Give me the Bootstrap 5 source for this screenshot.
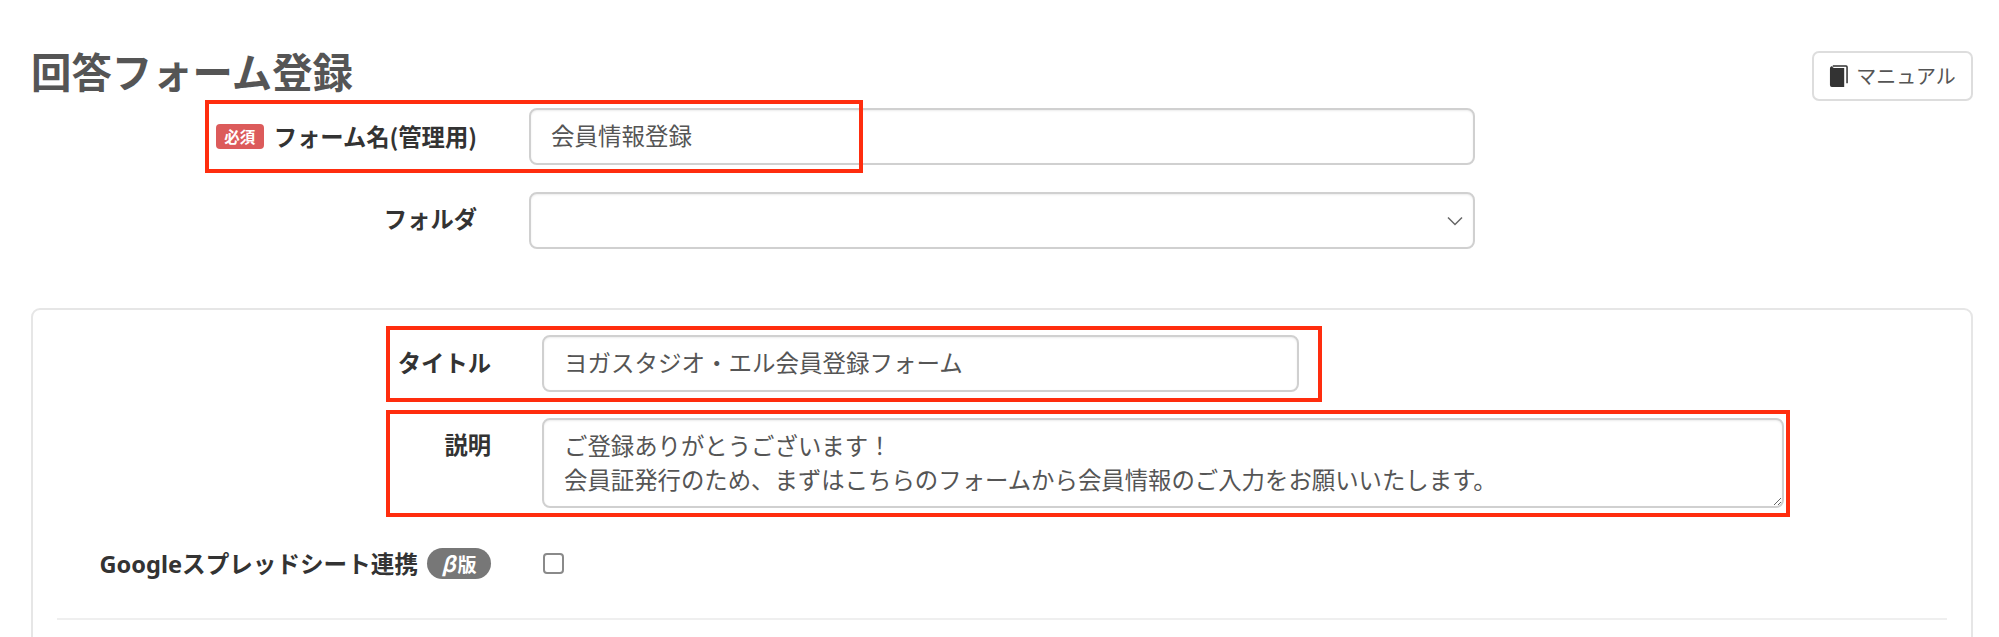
<!DOCTYPE html>
<html lang="ja">
<head>
<meta charset="utf-8">
<title>回答フォーム登録</title>
<link href="https://cdn.jsdelivr.net/npm/bootstrap@5.3.0/dist/css/bootstrap.min.css" rel="stylesheet">
<style>
html, body { height: 100%; overflow: hidden; background: #fff; }
body { font-family: "Noto Sans", "Noto Sans CJK JP", sans-serif; font-size: 23.3px; color: #333; }
.page-shell { height: 637px; overflow: hidden; padding: 51px 26px 0 31px; }
.top-bar { height: 50px; margin-bottom: 7px; }
.page-heading { font-family: "Noto Sans CJK JP", sans-serif; font-size: 40.4px; font-weight: 700; color: #555; line-height: 48px; margin: -4px 0 0; }
.manual-btn { width: 161px; height: 50px; border: 2px solid #ddd; border-radius: 7px; background: #fff; color: #555; font-size: 20px; padding: 0; font-family: "Noto Sans CJK JP", sans-serif; }
.manual-btn svg { width: 19px; height: 22px; }
.field-row { position: relative; }
.field-label { font-weight: 700; color: #333; line-height: 1.2; font-family: "Noto Sans CJK JP", sans-serif; }
.outer-label { width: 446px; margin-right: 52px; }
.inner-label { width: 434px; margin-right: 51px; }
.wide-field { width: 946px; }
.form-control.big-field, .form-select.big-field {
  height: 57px; border: 2px solid #d0d0d0; border-radius: 8px; font-size: 23.5px; color: #555;
  padding: 0 20px 3px; box-shadow: inset 0 1px 2px rgba(0,0,0,.08); font-family: "Noto Sans CJK JP", sans-serif;
}
.form-select.big-field {
  background-image: url("data:image/svg+xml,%3csvg xmlns='http://www.w3.org/2000/svg' viewBox='0 0 16 16'%3e%3cpath fill='none' stroke='%23666' stroke-width='1.5' d='M1 4.5l7 7 7-7'/%3e%3c/svg%3e");
  background-position: right 9px center; background-size: 18px 16px;
}
.outer-row-1 { margin-bottom: 27px; }
.folder-label { padding-bottom: 3px; }
.panel-box { margin-top: 59px; height: 400px; border: 2px solid #e6e6e6; border-radius: 9px; padding: 25px 24px 0; }
.title-field { width: 757px; }
.desc-field { width: 1242px; }
.form-control.big-field.desc-area { height: 90px; padding: 8px 20px 0; line-height: 34px; resize: vertical; font-size: 23.4px; }
.title-row { margin-bottom: 26px; }
.title-row .field-label { padding-bottom: 2px; }
.desc-row { margin-bottom: 40px; align-items: flex-start; }
.desc-row .field-label { padding-top: 13px; }
.google-row { height: 31px; }
.google-text { font-size: 23.6px; }
.google-text b { font-family: "Noto Sans", sans-serif; font-weight: 700; }
.req-tag { width: 48px; height: 25px; background: #dc5b5b; color: #fff; border-radius: 4px; font-size: 15.5px; font-weight: 700; margin-right: 10px; line-height: 25px; text-align: center; }
.beta-tag { width: 64px; height: 31px; background: #777; color: #fff; border-radius: 16px; font-size: 19px; font-weight: 700; margin-left: 9px; line-height: 31px; text-align: center; }
.beta-tag i { font-size: 21px; margin-right: 2px; }
.form-check-input.sync-check { width: 21px; height: 21px; margin: 0 0 0 1px; border: 2px solid #8a8a8a; border-radius: 4px; }
.panel-rule { margin: 39px 0 0; border: 0; border-top: 2px solid #efefef; opacity: 1; }
.red-mark { position: absolute; border: 4px solid #ff2d0e; pointer-events: none; }
.mark-name { left: 174px; top: -8px; width: 658px; height: 73px; }
.mark-title { left: 329px; top: -9px; width: 936px; height: 76px; }
.mark-desc { left: 329px; top: -8px; width: 1404px; height: 107px; }
</style>
</head>
<body>
<div class="page-shell">
  <div class="top-bar d-flex justify-content-between align-items-start">
    <h1 class="page-heading">回答フォーム登録</h1>
    <button type="button" class="btn manual-btn d-flex align-items-center justify-content-center gap-2">
      <svg viewBox="0 0 20 23" aria-hidden="true"><path d="M4 1h14a1 1 0 0 1 1 1v17" fill="none" stroke="#333" stroke-width="1.6"/><path d="M1 4a3 3 0 0 1 3-3l-.5 0c0 1 .5 2 2 2H16v20H3a2 2 0 0 1-2-2z" fill="#333"/></svg>
      <span>マニュアル</span>
    </button>
  </div>

  <div class="field-row outer-row-1 d-flex align-items-center">
    <div class="outer-label field-label d-flex justify-content-end align-items-center">
      <span class="req-tag">必須</span><span>フォーム名(管理用)</span>
    </div>
    <input class="form-control big-field wide-field" type="text" value="会員情報登録">
    <div class="red-mark mark-name"></div>
  </div>

  <div class="field-row d-flex align-items-center">
    <div class="outer-label field-label folder-label text-end">フォルダ</div>
    <select class="form-select big-field wide-field"><option></option></select>
  </div>

  <div class="panel-box">
    <div class="field-row title-row d-flex align-items-center">
      <div class="inner-label field-label text-end">タイトル</div>
      <input class="form-control big-field title-field" type="text" value="ヨガスタジオ・エル会員登録フォーム">
      <div class="red-mark mark-title"></div>
    </div>

    <div class="field-row desc-row d-flex">
      <div class="inner-label field-label text-end">説明</div>
      <textarea class="form-control big-field desc-area desc-field">ご登録ありがとうございます！
会員証発行のため、まずはこちらのフォームから会員情報のご入力をお願いいたします。</textarea>
      <div class="red-mark mark-desc"></div>
    </div>

    <div class="field-row google-row d-flex align-items-center">
      <div class="inner-label field-label d-flex justify-content-end align-items-center">
        <span class="google-text"><b>Google</b>スプレッドシート連携</span><span class="beta-tag"><i>β</i>版</span>
      </div>
      <input class="form-check-input sync-check" type="checkbox">
    </div>

    <hr class="panel-rule">
  </div>
</div>
<script src="https://cdn.jsdelivr.net/npm/bootstrap@5.3.0/dist/js/bootstrap.bundle.min.js"></script>
</body>
</html>
